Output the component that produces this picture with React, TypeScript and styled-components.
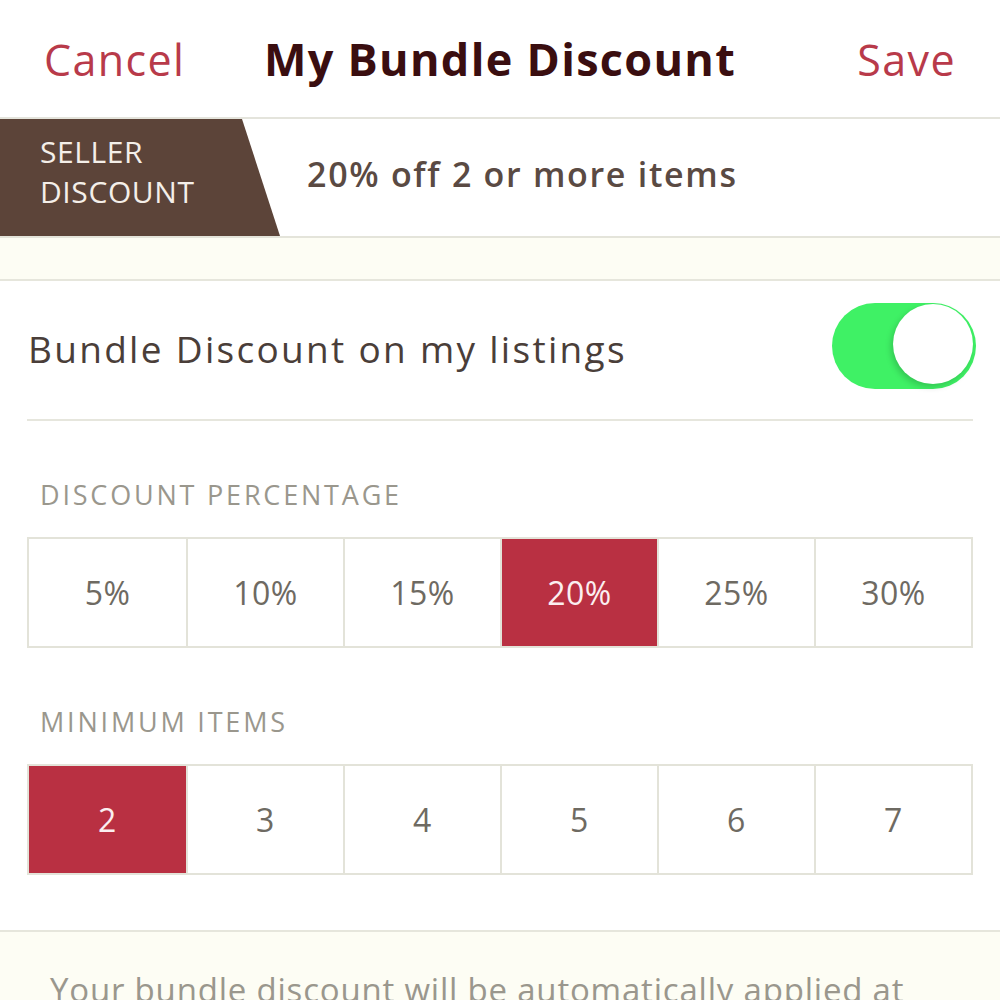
import React, { useState } from "react";
import styled, { createGlobalStyle } from "styled-components";

const GlobalStyle = createGlobalStyle`
  html, body {
    margin: 0;
    padding: 0;
    background: #ffffff;
  }
  body {
    font-family: "Open Sans", "Lato", sans-serif;
    overflow: hidden;
  }
`;

const Screen = styled.div`
  width: 1000px;
  height: 1000px;
  overflow: hidden;
  display: flex;
  flex-direction: column;
  background: #ffffff;
  & > * {
    flex-shrink: 0;
  }
`;

const NavBar = styled.header`
  height: 117px;
  display: grid;
  grid-template-columns: 1fr auto 1fr;
  align-items: center;
  padding: 0 44px;
  border-bottom: 2px solid #e4e4dc;
  box-sizing: content-box;
`;

const NavButton = styled.button<{ align: "start" | "end" }>`
  justify-self: ${(p) => p.align};
  background: none;
  border: none;
  padding: 0;
  font-family: inherit;
  font-size: 43px;
  color: #b83a4a;
  letter-spacing: 1.4px;
  cursor: pointer;
  margin-top: 2px;
`;

const NavTitle = styled.h1`
  margin: 0;
  font-size: 45px;
  font-weight: 700;
  color: #3a0e10;
  letter-spacing: 1.3px;
`;

const Banner = styled.div`
  height: 117px;
  display: flex;
  align-items: center;
  border-bottom: 2px solid #e4e4da;
`;

const Ribbon = styled.div`
  width: 280px;
  height: 100%;
  background: #5c4439;
  clip-path: polygon(0 0, 242px 0, 280px 100%, 0 100%);
  display: flex;
  flex-direction: column;
  justify-content: center;
  padding: 0 0 12px 40px;
  box-sizing: border-box;
  color: #f4efe9;
  font-size: 30px;
  line-height: 40px;
  letter-spacing: 0.6px;
`;

const BannerText = styled.div`
  margin: 0 0 7px 27px;
  font-size: 34px;
  font-weight: 600;
  color: #5a4a43;
  letter-spacing: 1.7px;
`;

const CreamGap = styled.div`
  height: 41px;
  background: #fdfdf4;
  border-bottom: 2px solid #e6e6dc;
`;

const Body = styled.div`
  padding: 0 27px;
  display: flex;
  flex-direction: column;
`;

const ToggleRow = styled.div`
  height: 138px;
  display: flex;
  align-items: center;
  justify-content: space-between;
  border-bottom: 2px solid #e6e6dd;
`;

const ToggleLabel = styled.span`
  font-size: 37px;
  color: #4a3e39;
  letter-spacing: 2.3px;
  margin: 0 0 3px 1px;
`;

const Switch = styled.button<{ on: boolean }>`
  position: relative;
  width: 144px;
  height: 86px;
  border-radius: 43px;
  border: none;
  padding: 0;
  margin-right: -3px;
  margin-bottom: 8px;
  background: ${(p) => (p.on ? "#3ff165" : "#e5e5e5")};
  cursor: pointer;
`;

const Knob = styled.span<{ on: boolean }>`
  position: absolute;
  top: 1px;
  left: ${(p) => (p.on ? "61px" : "2px")};
  width: 80px;
  height: 80px;
  border-radius: 50%;
  background: #ffffff;
  box-shadow: -2px 3px 6px rgba(0, 0, 0, 0.18);
`;

const SectionLabel = styled.div<{ top: number }>`
  margin-top: ${(p) => p.top}px;
  margin-left: 13px;
  font-size: 27px;
  color: #9a978d;
  letter-spacing: 2.8px;
  line-height: 36px;
`;

const OptionGrid = styled.div`
  margin-top: 24px;
  display: grid;
  grid-template-columns: repeat(6, 1fr);
  border: 2px solid #e3e3d9;
  height: 111px;
  box-sizing: border-box;
`;

const Option = styled.button<{ selected: boolean }>`
  border: none;
  border-left: 2px solid #e3e3d9;
  &:first-child {
    border-left: none;
  }
  background: ${(p) => (p.selected ? "#b93042" : "#ffffff")};
  color: ${(p) => (p.selected ? "#fbeef0" : "#6e6a62")};
  font-family: inherit;
  font-size: 32px;
  letter-spacing: 0.5px;
  padding: 0;
  cursor: pointer;
`;

const Footer = styled.div`
  margin-top: 55px;
  flex: 1;
  background: #fdfdf4;
  border-top: 2px solid #e6e6dc;
  padding: 36px 50px 0;
  font-size: 33px;
  color: #9a978d;
  letter-spacing: 0.8px;
  line-height: 44px;
`;

const percents = [5, 10, 15, 20, 25, 30];
const items = [2, 3, 4, 5, 6, 7];

export default function App() {
  const [enabled, setEnabled] = useState(true);
  const [percent, setPercent] = useState(20);
  const [minItems, setMinItems] = useState(2);

  return (
    <Screen>
      <GlobalStyle />
      <NavBar>
        <NavButton align="start">Cancel</NavButton>
        <NavTitle>My Bundle Discount</NavTitle>
        <NavButton align="end">Save</NavButton>
      </NavBar>
      <Banner>
        <Ribbon>
          <span>SELLER</span>
          <span>DISCOUNT</span>
        </Ribbon>
        <BannerText>
          {percent}% off {minItems} or more items
        </BannerText>
      </Banner>
      <CreamGap />
      <Body>
        <ToggleRow>
          <ToggleLabel>Bundle Discount on my listings</ToggleLabel>
          <Switch on={enabled} onClick={() => setEnabled(!enabled)}>
            <Knob on={enabled} />
          </Switch>
        </ToggleRow>
        <SectionLabel top={56}>DISCOUNT PERCENTAGE</SectionLabel>
        <OptionGrid>
          {percents.map((p) => (
            <Option key={p} selected={p === percent} onClick={() => setPercent(p)}>
              {p}%
            </Option>
          ))}
        </OptionGrid>
        <SectionLabel top={56}>MINIMUM ITEMS</SectionLabel>
        <OptionGrid>
          {items.map((n) => (
            <Option key={n} selected={n === minItems} onClick={() => setMinItems(n)}>
              {n}
            </Option>
          ))}
        </OptionGrid>
      </Body>
      <Footer>Your bundle discount will be automatically applied at</Footer>
    </Screen>
  );
}
